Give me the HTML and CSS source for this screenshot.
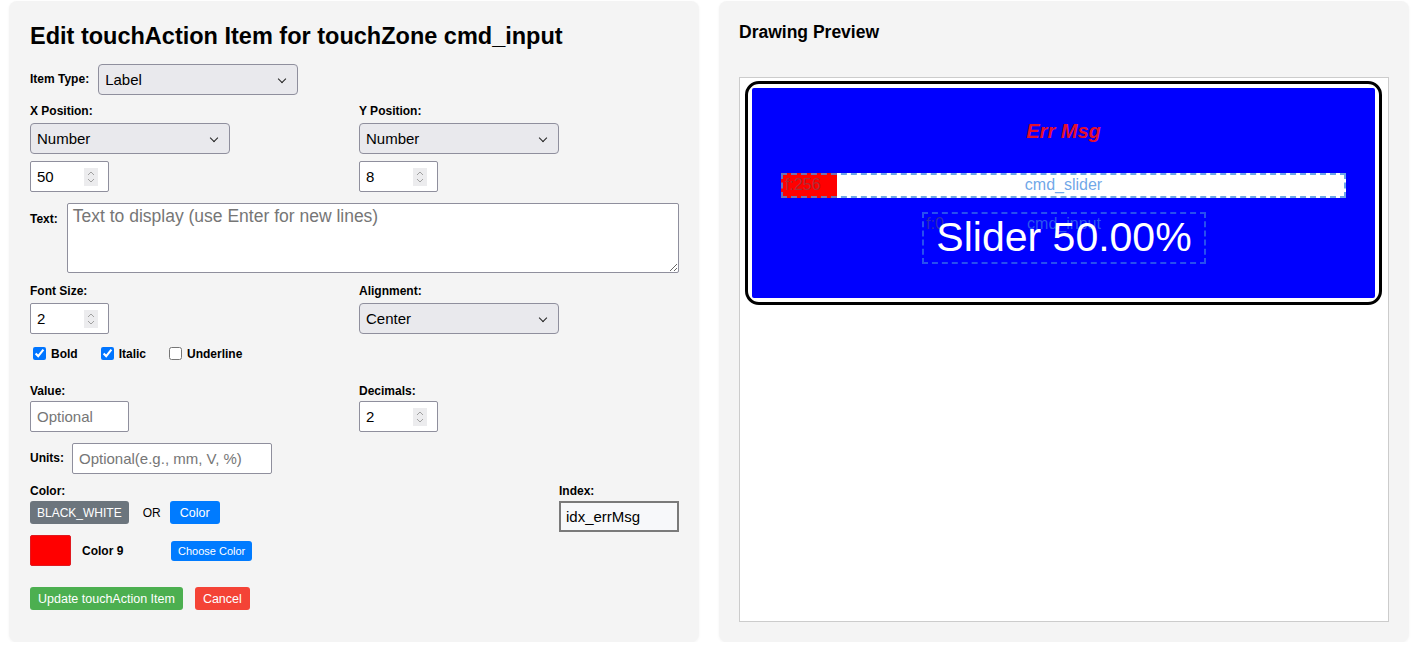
FILE: index.html
```html
<!DOCTYPE html>
<html lang="en">
<head>
  <meta charset="UTF-8">
  <meta name="viewport" content="width=device-width, initial-scale=1.0">
  <title>Edit touchAction Item</title>
  <link rel="stylesheet" href="styles.css">
</head>
<body>
  <div class="page">
    <section class="panel editor">
      <h2 class="editor-title">Edit touchAction Item for touchZone cmd_input</h2>

      <div class="field-inline">
        <label class="lbl">Item Type:</label>
        <div class="select-wrap">
          <select><option>Label</option></select>
        </div>
      </div>

      <div class="grid-2">
        <div class="field">
          <label class="lbl">X Position:</label>
          <div class="select-wrap"><select><option>Number</option></select></div>
          <span class="num-wrap spaced">
            <input type="text" class="num" value="50">
            <svg class="spin" width="14" height="18" viewBox="0 0 14 18"><rect width="14" height="18" fill="#ececee"/><polyline points="4,7 7,4 10,7" fill="none" stroke="#a0a0a0" stroke-width="1"/><polyline points="4,11 7,14 10,11" fill="none" stroke="#a0a0a0" stroke-width="1"/></svg>
          </span>
        </div>
        <div class="field">
          <label class="lbl">Y Position:</label>
          <div class="select-wrap"><select><option>Number</option></select></div>
          <span class="num-wrap spaced">
            <input type="text" class="num" value="8">
            <svg class="spin" width="14" height="18" viewBox="0 0 14 18"><rect width="14" height="18" fill="#ececee"/><polyline points="4,7 7,4 10,7" fill="none" stroke="#a0a0a0" stroke-width="1"/><polyline points="4,11 7,14 10,11" fill="none" stroke="#a0a0a0" stroke-width="1"/></svg>
          </span>
        </div>
      </div>

      <div class="text-row">
        <label class="lbl">Text:</label>
        <textarea placeholder="Text to display (use Enter for new lines)"></textarea>
      </div>

      <div class="grid-2">
        <div class="field">
          <label class="lbl">Font Size:</label>
          <span class="num-wrap">
            <input type="text" class="num" value="2">
            <svg class="spin" width="14" height="18" viewBox="0 0 14 18"><rect width="14" height="18" fill="#ececee"/><polyline points="4,7 7,4 10,7" fill="none" stroke="#a0a0a0" stroke-width="1"/><polyline points="4,11 7,14 10,11" fill="none" stroke="#a0a0a0" stroke-width="1"/></svg>
          </span>
        </div>
        <div class="field">
          <label class="lbl">Alignment:</label>
          <div class="select-wrap"><select><option>Center</option></select></div>
        </div>
      </div>

      <div class="checks">
        <label class="check"><input type="checkbox" checked> Bold</label>
        <label class="check"><input type="checkbox" checked> Italic</label>
        <label class="check"><input type="checkbox"> Underline</label>
      </div>

      <div class="grid-2 value-row">
        <div class="field">
          <label class="lbl">Value:</label>
          <input type="text" class="txt short" placeholder="Optional">
        </div>
        <div class="field">
          <label class="lbl">Decimals:</label>
          <span class="num-wrap">
            <input type="text" class="num" value="2">
            <svg class="spin" width="14" height="18" viewBox="0 0 14 18"><rect width="14" height="18" fill="#ececee"/><polyline points="4,7 7,4 10,7" fill="none" stroke="#a0a0a0" stroke-width="1"/><polyline points="4,11 7,14 10,11" fill="none" stroke="#a0a0a0" stroke-width="1"/></svg>
          </span>
        </div>
      </div>

      <div class="field-inline units-row">
        <label class="lbl">Units:</label>
        <input type="text" class="txt wide" placeholder="Optional(e.g., mm, V, %)">
      </div>

      <div class="color-row">
        <div class="color-group">
          <label class="lbl">Color:</label>
          <div class="btn-line">
            <button class="btn btn-gray">BLACK_WHITE</button>
            <span class="or">OR</span>
            <button class="btn btn-blue">Color</button>
          </div>
          <div class="swatch-line">
            <span class="swatch"></span>
            <span class="swatch-name">Color 9</span>
            <button class="btn btn-blue btn-small">Choose Color</button>
          </div>
        </div>
        <div class="index-group">
          <label class="lbl">Index:</label>
          <input type="text" class="index-input" value="idx_errMsg">
        </div>
      </div>

      <div class="actions">
        <button class="btn btn-green">Update touchAction Item</button>
        <button class="btn btn-red">Cancel</button>
      </div>
    </section>

    <section class="panel preview">
      <h3 class="preview-title">Drawing Preview</h3>
      <div class="canvas">
        <div class="device">
          <div class="screen">
            <div class="err-msg">Err Msg</div>

            <div class="zone slider-zone">
              <div class="slider-fill"></div>
              <span class="zone-f">f:256</span>
              <span class="zone-name">cmd_slider</span>
            </div>

            <div class="zone text-zone">
              <span class="zone-f">f:0</span>
              <span class="zone-name">cmd_input</span>
              <div class="slider-text">Slider 50.00%</div>
            </div>
          </div>
        </div>
      </div>
    </section>
  </div>
</body>
</html>
```

FILE: styles.css
```css
:root {
  --panel: #f4f4f4;
  --border: #8f8f9d;
  --blue: #007bff;
  --zone: rgba(74, 144, 226, 0.8);
}

body {
  margin: 0;
  font-family: "Liberation Sans", Arial, sans-serif;
  background: #fff;
  color: #000;
}

.page {
  display: flex;
  gap: 20px;
  padding: 1px 0 0 9px;
}

.panel {
  width: 690px;
  height: 641px;
  box-sizing: border-box;
  background: var(--panel);
  border-radius: 8px;
  padding: 20px;
  box-shadow: 0 1px 3px rgba(0,0,0,0.05);
}

.editor {
  padding-left: 21px;
}

.editor-title {
  margin: 1px 0 14px;
  font-size: 23.5px;
  line-height: 28px;
  font-weight: 700;
}

.lbl {
  display: block;
  font-size: 12px;
  font-weight: 700;
  line-height: 15px;
  margin-bottom: 4px;
}

.field-inline {
  display: flex;
  align-items: center;
  gap: 9px;
  margin-bottom: 9px;
}

.field-inline .lbl {
  margin-bottom: 0;
}

.grid-2 {
  display: grid;
  grid-template-columns: 1fr 1fr;
  column-gap: 9px;
}

.field {
  display: flex;
  flex-direction: column;
  align-items: flex-start;
}

/* form controls */
select,
input,
textarea,
button {
  font-family: "Liberation Sans", Arial, sans-serif;
}

.select-wrap {
  position: relative;
  display: inline-block;
}

.select-wrap::after {
  content: "";
  position: absolute;
  right: 13px;
  top: 12px;
  width: 5px;
  height: 5px;
  border-right: 1.6px solid #222;
  border-bottom: 1.6px solid #222;
  transform: rotate(45deg);
  pointer-events: none;
}

select {
  appearance: none;
  -webkit-appearance: none;
  width: 200px;
  height: 31px;
  box-sizing: border-box;
  padding: 0 24px 0 6px;
  font-size: 15px;
  color: #000;
  background: #e9e9ed;
  border: 1px solid var(--border);
  border-radius: 4px;
}

.num,
.txt,
.index-input {
  height: 31px;
  box-sizing: border-box;
  font-size: 15px;
  color: #000;
  background: #fff;
  border: 1px solid var(--border);
  border-radius: 2px;
  padding: 0 6px;
}

.num-wrap {
  position: relative;
  display: inline-block;
}

.num-wrap.spaced {
  margin-top: 7px;
}

.num {
  width: 79px;
  display: block;
}

.spin {
  position: absolute;
  left: 54px;
  top: 7px;
}

.txt::placeholder,
textarea::placeholder {
  color: #767676;
}

.text-row {
  display: flex;
  align-items: flex-start;
  gap: 9px;
  margin: 11px 0 11px;
}

.text-row .lbl {
  margin: 9px 0 0;
}

textarea {
  flex: 1;
  height: 70px;
  box-sizing: border-box;
  padding: 2px 5px;
  font-size: 17.5px;
  border: 1px solid var(--border);
  border-radius: 2px;
  resize: vertical;
}

.checks {
  display: flex;
  align-items: center;
  gap: 20px;
  margin: 10px 0 0;
}

.check {
  display: flex;
  align-items: center;
  gap: 2px;
  font-size: 12px;
  font-weight: 700;
}

.check input {
  margin: 3px 3px 3px 3px;
  width: 13px;
  height: 13px;
}

.value-row {
  margin-top: 21px;
}

.value-row .lbl {
  margin-bottom: 2px;
}

.txt.short {
  width: 99px;
}

.txt.wide {
  width: 200px;
}

.units-row {
  margin: 11px 0 0;
}

.units-row .txt {
  margin-left: -1px;
}

.color-row {
  display: flex;
  justify-content: space-between;
  align-items: flex-start;
  margin-top: 10px;
}

.color-row .lbl {
  margin-bottom: 2px;
}

.btn-line {
  display: flex;
  align-items: center;
  gap: 9px;
}

.or {
  font-size: 12px;
  margin-left: 5px;
}

.btn {
  height: 23px;
  padding: 0 8px;
  font-size: 12.5px;
  color: #fff;
  border: none;
  border-radius: 3px;
  cursor: pointer;
}

.btn-gray {
  background: #6c757d;
  font-size: 12px;
  padding: 0 7px;
}

.btn-blue {
  background: var(--blue);
  padding: 0 10px;
}

.btn-small {
  height: 20px;
  font-size: 11px;
  padding: 0 7px;
}

.btn-green {
  background: #4caf50;
}

.btn-red {
  background: #f44336;
  padding: 0 8px;
}

.swatch-line {
  display: flex;
  align-items: center;
  margin-top: 11px;
}

.swatch {
  width: 41px;
  height: 31px;
  box-sizing: border-box;
  background: #ff0000;
  border: 1px solid #e0191f;
  border-radius: 2px;
}

.swatch-name {
  width: 89px;
  margin-left: 11px;
  font-size: 12px;
  font-weight: 700;
}

.index-group {
  width: 120px;
}

.index-input {
  width: 120px;
  border: 2px solid #7a7a7a;
  border-radius: 0;
  background: #f7f8fa;
  padding: 0 5px;
}

.actions {
  display: flex;
  gap: 12px;
  margin-top: 21px;
}

/* preview */
.preview-title {
  margin: 0 0 34px;
  font-size: 17.5px;
  line-height: 22px;
  font-weight: 700;
}

.canvas {
  height: 545px;
  box-sizing: border-box;
  background: #fff;
  border: 1px solid #ccc;
  padding: 3px 5px;
}

.device {
  width: 623px;
  border: 3px solid #000;
  border-radius: 14px;
  padding: 4px;
  background: #fff;
}

.screen {
  position: relative;
  height: 210px;
  background: #0000ff;
  border-radius: 2px;
  overflow: hidden;
}

.err-msg {
  position: absolute;
  left: 0;
  right: 0;
  top: 33px;
  text-align: center;
  font-size: 20px;
  line-height: 20px;
  font-weight: 700;
  font-style: italic;
  color: #e3102e;
}

.zone {
  position: absolute;
}

.zone::after {
  content: "";
  position: absolute;
  inset: 0;
  border: 2px dashed var(--zone);
}

.zone-f,
.zone-name {
  position: absolute;
  top: 0;
  font-size: 16px;
  line-height: 24px;
  white-space: nowrap;
}

.zone-f {
  left: 4px;
  color: rgba(90, 90, 110, 0.5);
}

.zone-name {
  left: 0;
  right: 0;
  text-align: center;
  color: var(--zone);
}

.slider-zone {
  left: 29px;
  top: 85px;
  width: 565px;
  height: 25px;
  background: #fff;
}

.slider-fill {
  position: absolute;
  left: 0;
  top: 0;
  bottom: 0;
  width: 56px;
  background: #ff0000;
}

.text-zone {
  left: 170px;
  top: 124px;
  width: 284px;
  height: 52px;
}

.text-zone::after {
  border-color: rgba(74, 144, 226, 0.55);
}

.text-zone .zone-name {
  color: rgba(74, 144, 226, 0.6);
}

.slider-text {
  position: absolute;
  left: 0;
  right: 0;
  top: 2px;
  text-align: center;
  font-size: 41px;
  line-height: 46px;
  color: #fff;
}
```
